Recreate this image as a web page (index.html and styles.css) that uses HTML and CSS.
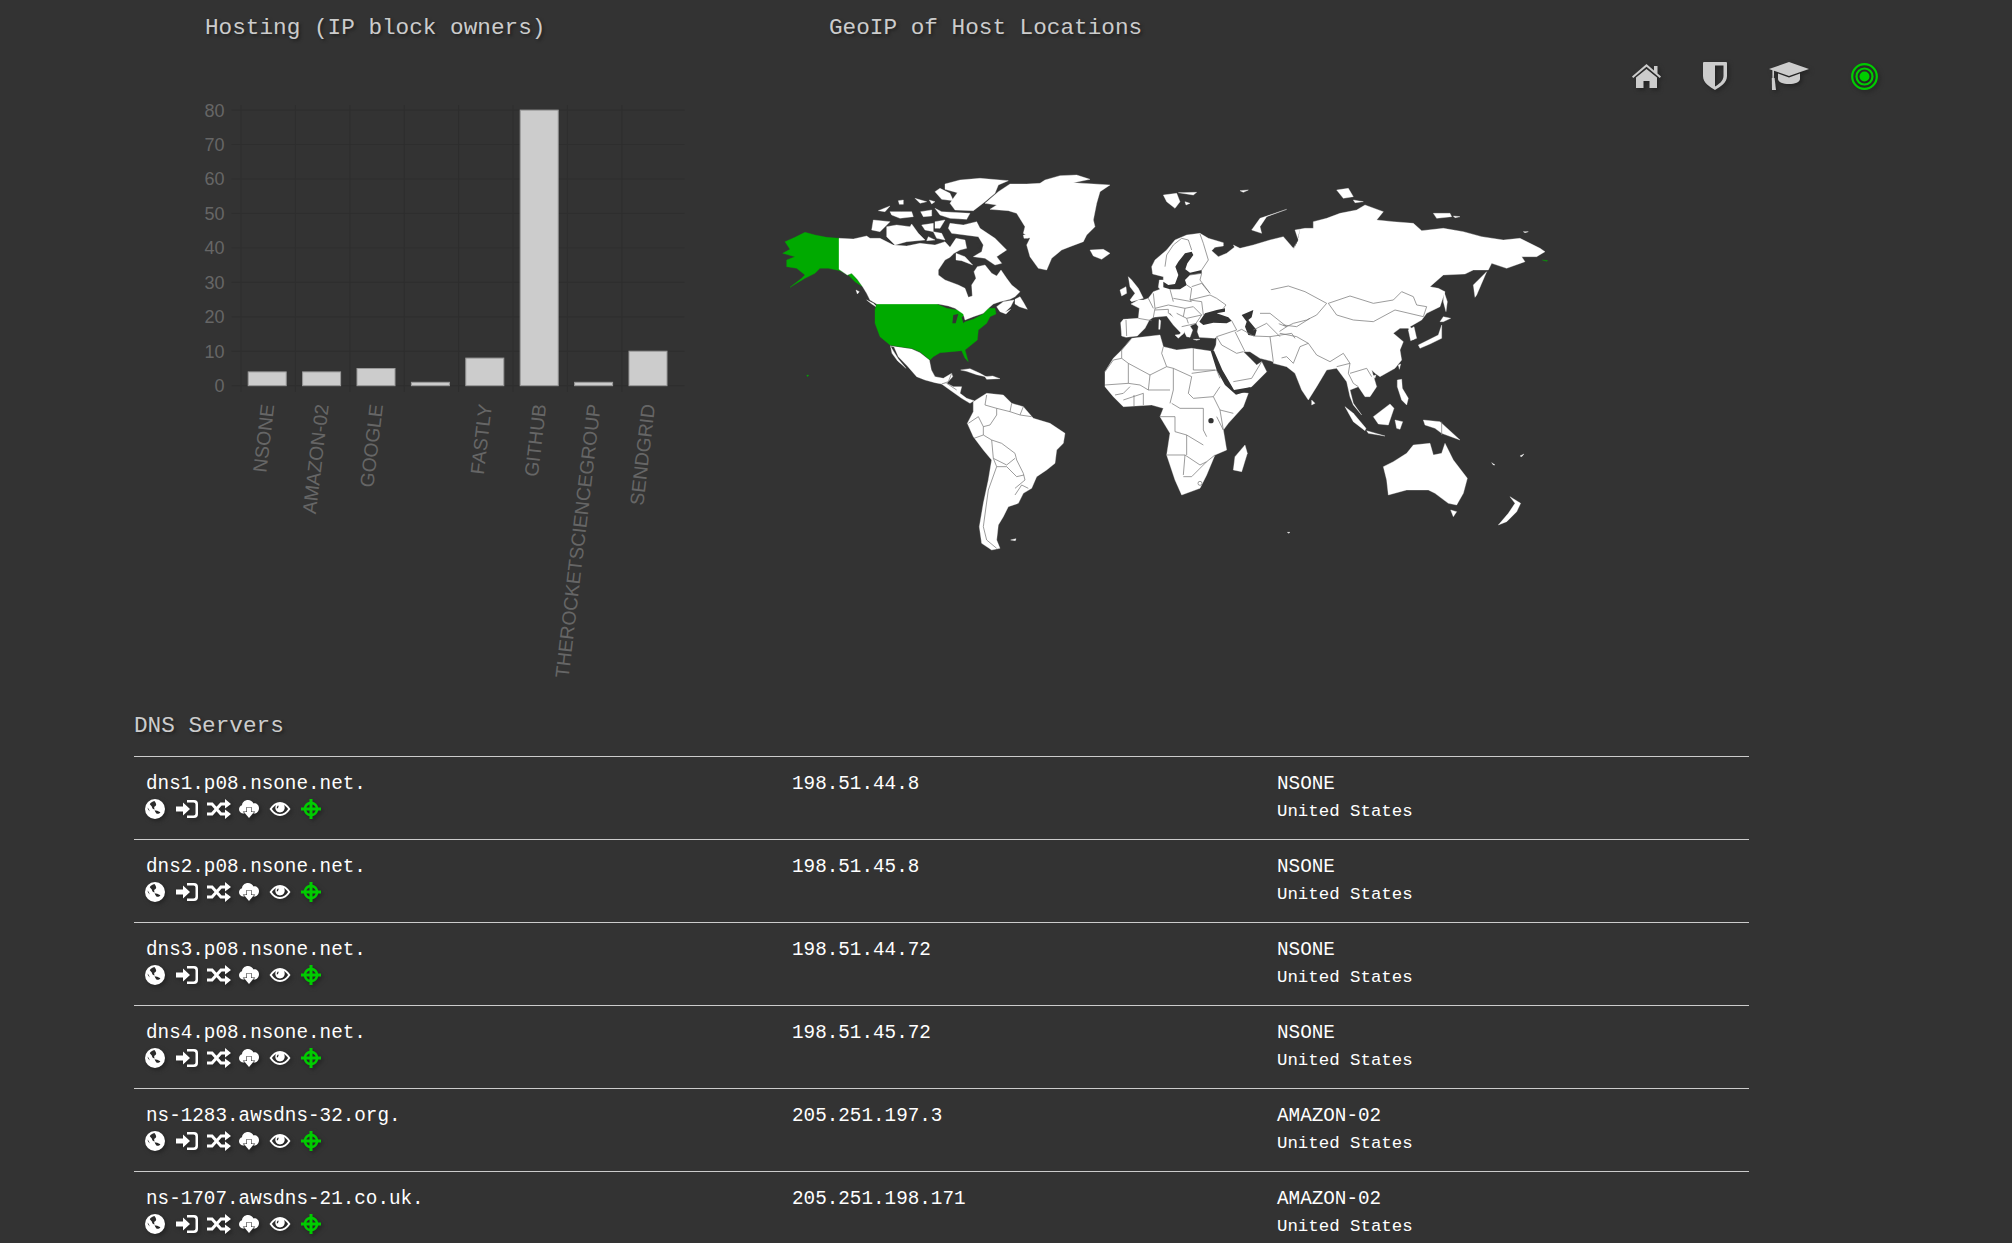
FILE: index.html
```html
<!DOCTYPE html>
<html lang="en">
<head>
    <meta charset="UTF-8">
    <title>Host report</title>
    <link rel="stylesheet" href="styles.css">
</head>
<body>
    <svg class="defs" width="0" height="0">
        <symbol id="i-globe" viewBox="0 0 20 20">
            <path fill-rule="evenodd" d="M10 0a10 10 0 1 1 0 20a10 10 0 1 1 0-20Z M9.4 2C7.4 2.4 5.6 3.6 4.8 5.2C5.6 6.4 6.8 6.8 7 8.2C7.4 9.8 8.6 10.2 9.8 10.6C9.2 9.4 8.8 8.4 9.6 7.6C11 7 11.6 5.4 10.8 4.2C10.4 3.4 10 2.8 9.4 2Z M9.6 11.2C11 11.2 13.4 12 15.4 13.2C14.4 14.6 12.6 15.2 11.4 14.4C10.4 13.4 9.9 12.2 9.6 11.2Z M2.6 8.6C2.8 10.4 3.6 11.6 4.8 12.4C4.2 11 3.6 9.6 2.6 8.6Z"/>
        </symbol>
        <symbol id="i-signin" viewBox="0 0 22 20">
            <path d="M0 7.5H7V3.5L14 10L7 16.5V12.5H0Z"/>
            <path d="M11 1H18a4 4 0 0 1 4 4V15a4 4 0 0 1-4 4H11V16.5H17.5a2 2 0 0 0 2-2V5.5a2 2 0 0 0-2-2H11Z"/>
        </symbol>
        <symbol id="i-random" viewBox="0 0 24 20">
            <path class="thick" d="M0 5H5L14 15H19M0 15H5L14 5H19"/>
            <path d="M18 0L24 5L18 9.6ZM18 10.4L24 15L18 20Z"/>
        </symbol>
        <symbol id="i-cloud" viewBox="0 0 20 20">
            <path d="M4.5 14.5C2 14.5 0 12.6 0 10.2C0 8.4 1.2 6.8 3 6.2C3.3 3.2 5.8 1 9 1C11.4 1 13.5 2.3 14.5 4.4C17.6 4 20 6.2 20 9.2C20 12.2 17.8 14.5 15 14.5Z"/>
            <path class="cut" d="M8 8.5H12V13H15L10 19L5 13H8Z"/>
        </symbol>
        <symbol id="i-eye" viewBox="0 0 21 14">
            <path fill-rule="evenodd" d="M0 7C3 2.4 6.5 0 10.5 0C14.5 0 18 2.4 21 7C18 11.6 14.5 14 10.5 14C6.5 14 3 11.6 0 7Z M2.4 7C4.6 10.2 7.4 12 10.5 12C13.6 12 16.4 10.2 18.6 7C17.4 5.2 16 3.9 14.4 3C15 3.8 15.2 4.8 15.2 5.8C15.2 8.4 13.1 10.5 10.5 10.5C7.9 10.5 5.8 8.4 5.8 5.8C5.8 4.8 6 3.8 6.6 3C5 3.9 3.6 5.2 2.4 7Z M8.4 3.6C7.6 4.4 7.2 5.4 7.4 6.4L8.6 6C8.5 5.2 8.8 4.6 9.4 4.1Z"/>
        </symbol>
        <symbol id="i-cross" viewBox="0 0 20 20">
            <path fill-rule="evenodd" d="M8.5 0H11.5V2.8C14.4 3.4 16.6 5.6 17.2 8.5H20V11.5H17.2C16.6 14.4 14.4 16.6 11.5 17.2V20H8.5V17.2C5.6 16.6 3.4 14.4 2.8 11.5H0V8.5H2.8C3.4 5.6 5.6 3.4 8.5 2.8Z M8.5 5.4C6.9 5.9 5.9 6.9 5.4 8.5H8.5Z M11.5 5.4V8.5H14.6C14.1 6.9 13.1 5.9 11.5 5.4Z M5.4 11.5C5.9 13.1 6.9 14.1 8.5 14.6V11.5Z M11.5 11.5V14.6C13.1 14.1 14.1 13.1 14.6 11.5Z"/>
        </symbol>
    </svg>

    <div class="top">
        <div class="hosting">
            <h2 class="title hosting-title">Hosting (IP block owners)</h2>
            <svg class="chart" viewBox="190 90 580 600" width="580" height="600">
                <g class="grid">
                    <path d="M231.6 110.1H684.5M231.6 144.5H684.5M231.6 179H684.5M231.6 213.4H684.5M231.6 247.9H684.5M231.6 282.3H684.5M231.6 316.8H684.5M231.6 351.2H684.5M231.6 385.7H684.5"/>
                    <path d="M241 105V392M295.4 105V392M349.8 105V392M404.2 105V392M458.6 105V392M513 105V392M567.4 105V392M621.8 105V392"/>
                </g>
                <g class="ticks">
                    <text x="224.5" y="116.5">80</text>
                    <text x="224.5" y="150.9">70</text>
                    <text x="224.5" y="185.4">60</text>
                    <text x="224.5" y="219.8">50</text>
                    <text x="224.5" y="254.3">40</text>
                    <text x="224.5" y="288.7">30</text>
                    <text x="224.5" y="323.2">20</text>
                    <text x="224.5" y="357.6">10</text>
                    <text x="224.5" y="392.1">0</text>
                </g>
                <g class="bars">
                    <rect x="248.2" y="371.9" width="38" height="13.8"/>
                    <rect x="302.6" y="371.9" width="38" height="13.8"/>
                    <rect x="357" y="368.5" width="38" height="17.2"/>
                    <rect x="411.4" y="382.3" width="38" height="3.4"/>
                    <rect x="465.8" y="358.1" width="38" height="27.6"/>
                    <rect x="520.2" y="110.1" width="38" height="275.6"/>
                    <rect x="574.6" y="382.3" width="38" height="3.4"/>
                    <rect x="629" y="351.2" width="38" height="34.5"/>
                </g>
                <g class="labels">
                    <text transform="translate(274.3 405) rotate(-83.3)">NSONE</text>
                    <text transform="translate(328.7 405) rotate(-83.3)">AMAZON-02</text>
                    <text transform="translate(383.1 405) rotate(-83.3)">GOOGLE</text>
                    <text transform="translate(491.9 405) rotate(-83.3)">FASTLY</text>
                    <text transform="translate(546.3 405) rotate(-83.3)">GITHUB</text>
                    <text transform="translate(600.7 405) rotate(-83.3)">THEROCKETSCIENCEGROUP</text>
                    <text transform="translate(655.1 405) rotate(-83.3)">SENDGRID</text>
                </g>
            </svg>
        </div>

        <div class="geoip">
            <h2 class="title geoip-title">GeoIP of Host Locations</h2>
            <svg class="map" viewBox="0 0 790 400" width="790" height="400">
                <!-- americas -->
                <g transform="scale(.33333)">
                    <g class="land">
                        <polygon points="735,418 750,410 762,430 772,448 748,440 735,432"/>
                        <polygon points="680,440 700,425 732,420 722,440 705,457 722,448 708,462 690,455"/>
                        <polygon points="360,558 390,562 425,567 450,578 478,600 484,630 495,650 520,655 545,640 548,650 530,670 515,672 495,668 465,660 440,650 412,618 385,590 372,560"/>
                        <polygon points="362,560 385,597 408,625 383,603 366,580"/>
                        <polygon points="572,630 600,626 630,640 650,651 620,644 590,634"/>
                        <polygon points="645,650 668,648 690,656 650,658"/>
                        <polygon points="515,672 530,670 550,680 575,680 570,700 590,715 612,722 600,730 575,715 540,690"/>
                        <polygon points="610,725 650,700 700,705 725,730 760,740 790,775 840,790 885,820 880,850 860,870 855,910 830,930 800,950 785,985 760,1000 745,1030 715,1040 700,1070 685,1095 680,1140 690,1165 665,1170 635,1150 628,1100 640,1030 655,960 665,900 640,870 610,830 592,790 610,755"/>
                        <polygon points="722,1140 738,1136 736,1142"/>
                        <polygon points="258,390 268,395 262,402"/>
                        <polygon points="290,420 310,430 325,445 305,432"/>
                    </g>
                    <g class="usa">
                        <polygon points="45,245 75,232 105,217 135,225 170,232 207,235 207,328 232,345 245,340 262,360 278,380 255,365 235,345 210,332 175,325 150,325 135,340 105,355 60,382 95,355 105,345 80,325 50,320 50,300 75,290 38,280 60,268"/>
                        <polygon points="320,432 500,432 530,445 560,450 590,455 590,470 580,487 610,478 640,462 655,445 675,445 678,462 660,470 650,490 625,510 622,540 585,570 595,605 585,595 575,572 545,575 510,578 490,590 480,600 450,575 425,565 390,560 360,555 330,530 315,490 315,450"/>
                        <polygon points="110,645 116,646 113,650"/>
                    </g>
                    <g class="sea">
                        <polygon points="547,490 550,465 565,462 557,490"/>
                        <polygon points="575,472 590,462 592,478 580,490"/>
                    </g>
                    <g class="border">
                        <polyline points="650,705 645,735 680,745 680,765 660,795 640,800 625,770 595,790"/>
                        <polyline points="680,745 720,755 725,730"/>
                        <polyline points="720,755 750,765 760,740"/>
                        <polyline points="750,765 785,770"/>
                        <polyline points="640,800 640,825 665,840 695,850 735,880 740,900 760,940 765,960 735,985"/>
                        <polyline points="640,825 612,835"/>
                        <polyline points="665,840 670,895 710,915 735,895"/>
                        <polyline points="670,895 680,920 655,990 640,1100 650,1140 680,1165"/>
                        <polyline points="680,920 710,920 740,950 762,945"/>
                        <polyline points="735,1005 755,975 775,985"/>
                        <polyline points="545,640 535,665 515,672"/>
                        <polyline points="530,670 560,690"/>
                    </g>
                </g>

                <!-- canada and the arctic -->
                <g transform="translate(100 10) scale(.33333)">
                    <g class="land">
                        <polygon points="-93,205 -50,207 -10,198 0,205 30,205 70,225 110,228 150,220 195,225 225,215 240,232 258,205 285,210 290,235 270,240 252,250 240,262 225,270 205,300 205,315 225,330 265,345 285,355 295,382 307,378 305,345 318,325 312,305 322,290 345,285 365,310 380,318 393,300 410,325 425,345 450,365 435,380 420,388 390,395 370,402 355,415 340,430 310,440 285,450 280,432 255,415 235,408 205,402 20,402 0,390 -10,370 -22,350 -38,328 -55,310 -68,315 -93,298"/>
                        <polygon points="345,100 385,65 420,42 470,42 510,40 525,30 570,17 620,15 660,28 610,38 720,45 690,65 680,100 670,150 675,170 650,195 640,215 600,230 575,240 545,265 530,300 505,295 480,260 470,225 480,205 460,190 465,170 440,130 415,122 360,118 380,105"/>
                        <polygon points="225,42 270,30 330,25 415,32 385,45 375,70 345,95 310,122 255,120 240,100 250,85 262,68 225,58"/>
                        <polygon points="195,65 210,55 240,70 250,92 215,88"/>
                        <polygon points="25,122 60,108 45,125"/>
                        <polygon points="60,125 95,125 125,125 130,140 90,145 65,135"/>
                        <polygon points="85,92 100,90 100,103 88,103"/>
                        <polygon points="135,85 170,95 150,100"/>
                        <polygon points="178,90 195,95 185,102"/>
                        <polygon points="152,125 185,120 185,138 160,140"/>
                        <polygon points="195,115 215,125 300,130 290,148 240,145 210,135"/>
                        <polygon points="10,150 60,155 30,185 5,180"/>
                        <polygon points="50,170 80,165 120,170 125,162 145,190 165,210 110,215 75,225 50,200"/>
                        <polygon points="155,165 190,160 190,185 165,180"/>
                        <polygon points="195,155 225,150 210,175 195,175"/>
                        <polygon points="190,185 215,190 225,210 200,205"/>
                        <polygon points="175,200 195,210 170,212"/>
                        <polygon points="240,160 280,165 320,155 330,175 375,205 410,240 380,260 395,280 375,285 345,265 310,260 335,245 340,225 325,200 285,195 245,190 235,175"/>
                        <polygon points="258,250 285,260 308,285 275,272 258,270"/>
                        <polygon points="460,195 485,195 475,205 462,205"/>
                        <polygon points="660,240 700,238 720,250 695,268 670,258"/>
                    </g>
                    <g class="sea">
                        <polygon points="318,220 332,218 328,235 318,232"/>
                    </g>
                </g>

                <!-- asia, africa and the east -->
                <g transform="translate(290 0) scale(.33333)">
                    <g class="land">
                        <polygon points="520,255 540,265 580,255 630,240 670,230 700,265 715,240 705,210 735,205 760,205 760,185 800,175 840,160 890,150 915,135 970,155 950,180 1000,185 1060,190 1085,212 1150,205 1210,215 1265,230 1330,240 1380,235 1440,265 1455,275 1430,290 1385,290 1395,305 1340,325 1295,310 1285,330 1240,330 1215,342 1150,345 1110,380 1135,385 1155,395 1140,440 1100,460 1085,480 1050,500 1060,510 1060,540 1045,505 1020,505 1000,520 1030,545 1020,570 1025,600 1005,625 960,650 945,640 935,630 950,680 930,710 915,710 895,680 870,690 880,730 905,765 880,735 870,710 860,665 830,625 800,630 770,680 745,720 725,690 705,640 680,620 640,610 640,450"/>
                        <polygon points="135,635 160,595 185,570 215,535 300,525 310,560 350,570 395,565 465,575 470,600 490,650 520,695 565,700 550,740 505,790 490,810 500,870 465,885 440,945 420,985 365,1005 345,960 320,885 330,820 300,770 310,745 275,735 190,740 160,710 135,680"/>
                        <polygon points="555,855 562,880 545,935 520,930 525,890"/>
                        <polygon points="310,105 350,100 360,125 345,145 320,125"/>
                        <polygon points="355,98 410,97 400,105"/>
                        <polygon points="375,125 390,130 378,135"/>
                        <polygon points="540,92 565,90 550,97"/>
                        <polygon points="575,210 600,175 680,148 620,170 600,200 605,220"/>
                        <polygon points="755,720 765,730 755,735"/>
                        <polygon points="1090,780 1140,785 1200,840 1145,820 1125,805 1095,795"/>
                        <polygon points="970,920 1000,905 1040,880 1060,855 1110,850 1120,885 1145,880 1155,850 1180,900 1222,955 1210,1000 1190,1035 1165,1030 1125,1000 1105,990 1040,990 985,1005 980,960"/>
                        <polygon points="1172,1050 1190,1055 1180,1070"/>
                        <polygon points="1350,1010 1382,1030 1370,1055 1340,1085 1315,1095 1345,1060 1365,1030"/>
                        <polygon points="830,90 865,85 880,110 850,115"/>
                        <polygon points="880,120 910,125 885,128"/>
                        <polygon points="1120,160 1170,160 1175,170 1130,175"/>
                        <polygon points="1180,168 1200,170 1185,173"/>
                        <polygon points="1390,215 1405,215 1395,218"/>
                        <polygon points="682,1117 690,1117 686,1120"/>
                        <polygon points="1380,888 1392,882 1385,890"/>
                        <polygon points="1295,908 1305,915 1300,915"/>
                    </g>
                    <g class="sea">
                        <polygon points="700,270 712,240 722,200 712,245"/>
                    </g>
                    <g class="usa">
                        <polygon points="1447,300 1463,302 1460,304"/>
                    </g>
                    <g class="border">
                        <polyline points="600,470 680,500 700,490 740,480 770,465 800,430 735,395 685,378 630,390 625,415 560,410 540,420 540,445"/>
                        <polyline points="805,430 870,408 940,430 1000,420 1025,395 1060,410 1070,435 1100,440 1090,470 1005,450 940,485 880,480 830,465 805,430"/>
                        <polyline points="600,490 650,520 680,500"/>
                        <polyline points="630,575 630,545 660,520 710,530 745,550"/>
                        <polyline points="640,600 680,590 700,610 720,560 745,550"/>
                        <polyline points="745,550 770,585 810,605 850,580 870,610 830,620"/>
                        <polyline points="870,610 865,640 880,670 895,680"/>
                        <polyline points="870,640 920,625 935,650"/>
                        <polyline points="185,595 205,610 270,645 320,620 305,580 310,560"/>
                        <polyline points="215,535 185,570 185,595 160,600 135,635"/>
                        <polyline points="205,610 205,670 135,675"/>
                        <polyline points="400,565 400,630 465,630"/>
                        <polyline points="320,620 340,625 395,650 385,700 400,715 460,710"/>
                        <polyline points="340,625 340,690 330,730"/>
                        <polyline points="395,640 470,630 480,655"/>
                        <polyline points="270,645 265,690 330,690"/>
                        <polyline points="205,670 240,675 265,690"/>
                        <polyline points="190,720 250,700 250,735"/>
                        <polyline points="222,705 222,738"/>
                        <polyline points="165,705 190,700 210,680"/>
                        <polyline points="480,680 460,710 480,750 520,760"/>
                        <polyline points="335,730 360,745 430,745"/>
                        <polyline points="300,770 345,770 345,815 380,825 430,855"/>
                        <polyline points="380,825 380,885"/>
                        <polyline points="320,885 375,885 370,945"/>
                        <polyline points="430,745 430,810 440,830"/>
                        <polyline points="480,750 490,810 470,770"/>
                        <polyline points="375,885 420,915 440,905 465,885"/>
                        <polyline points="370,950 395,950 440,905"/>
                        <polyline points="1145,785 1145,825"/>
                        <circle cx="420" cy="970" r="6"/>
                    </g>
                    <circle class="sea" cx="453" cy="782" r="8"/>
                </g>

                <!-- europe and the middle east -->
                <g transform="translate(340 70) scale(.33333)">
                    <g class="land">
                        <polygon points="125,110 135,90 170,60 195,30 230,15 270,10 295,25 340,38 340,48 315,52 305,62 325,80 350,70 375,50 500,200 515,395 490,395 450,385 420,365 400,365 420,385 440,405 455,395 470,425 425,470 385,482 372,482 335,420 305,375 318,345 320,320 315,325 268,322 262,305 265,290 258,280 240,288 248,300 240,322 230,320 215,290 180,250 175,250 200,270 222,295 222,310 205,322 212,308 190,285 170,258 130,262 118,270 105,295 82,318 48,322 35,318 32,278 40,268 85,265 88,235 63,222 85,210 100,210 115,205 130,185 150,178 145,172 148,150 160,150 160,140 128,132"/>
                        <polygon points="55,140 65,150 85,175 100,205 65,215 60,210 75,190 60,170"/>
                        <polygon points="30,180 48,170 50,190 35,198"/>
                        <polygon points="147,268 152,272 150,298 146,298"/>
                        <polygon points="195,315 218,312 205,325"/>
                        <polygon points="250,328 270,328 260,331"/>
                        <polygon points="300,318 310,316 304,322"/>
                    </g>
                    <g class="sea">
                        <polygon points="160,155 175,165 195,162 205,135 196,110 205,95 225,70 245,65 250,75 232,100 226,118 240,128 275,120 275,130 240,135 225,150 230,165 210,178 180,178 160,172"/>
                        <polygon points="268,275 285,250 320,240 345,235 345,245 320,250 355,262 365,272 350,280 310,278 280,285"/>
                        <polygon points="395,255 430,240 425,262 415,270 440,300 435,318 415,315 405,290 410,275"/>
                        <polygon points="302,362 312,362 337,420 372,480 420,472 418,482 378,494 345,465 320,420"/>
                    </g>
                    <g class="border">
                        <polyline points="165,110 170,75 190,45 215,25 235,30 245,60"/>
                        <polyline points="270,12 280,40 295,90 275,120"/>
                        <polyline points="240,135 275,130 270,150 300,190"/>
                        <polyline points="180,178 190,215"/>
                        <polyline points="190,205 245,215"/>
                        <polyline points="230,165 245,175 240,210"/>
                        <polyline points="245,170 275,160 300,190"/>
                        <polyline points="240,210 300,195 320,205 348,225 340,235"/>
                        <polyline points="130,190 135,235 175,225"/>
                        <polyline points="115,205 130,235"/>
                        <polyline points="135,235 130,262"/>
                        <polyline points="85,265 125,272"/>
                        <polyline points="48,270 50,318"/>
                        <polyline points="135,240 175,238 175,250"/>
                        <polyline points="175,225 225,235 220,260"/>
                        <polyline points="225,235 250,230 275,255"/>
                        <polyline points="240,210 275,215 280,255"/>
                        <polyline points="230,265 275,255 258,280"/>
                        <polyline points="215,290 260,280"/>
                        <polyline points="200,250 230,265 235,280"/>
                        <polyline points="320,320 380,300 365,272"/>
                        <polyline points="320,320 335,345 380,370 400,365"/>
                        <polyline points="375,305 405,365"/>
                        <polyline points="370,455 425,445 455,395"/>
                        <polyline points="380,305 395,298 430,318 480,320 490,395"/>
                        <polyline points="450,250 480,250 530,290"/>
                        <polyline points="430,300 470,280 510,320"/>
                        <polyline points="480,320 545,310 555,325"/>
                        <polyline points="520,285 560,290 600,265"/>
                    </g>
                </g>

                <!-- japan and the islands -->
                <g transform="translate(570 110) scale(.33333)">
                    <g class="land">
                        <polygon points="312,65 322,95 318,125 310,95"/>
                        <polygon points="300,155 310,140 332,145 310,155"/>
                        <polygon points="235,225 265,210 295,195 305,165 305,205 270,222 240,235"/>
                        <polygon points="400,45 440,5 410,75 405,82"/>
                        <polygon points="97,318 108,315 105,325"/>
                        <polygon points="175,285 182,282 178,298"/>
                        <polygon points="172,330 185,328 187,355 205,385 200,405 185,390 172,350"/>
                        <polygon points="100,440 150,402 162,415 145,465 115,462"/>
                        <polygon points="165,450 188,455 180,478 170,475"/>
                        <polygon points="15,410 40,430 78,475 75,482 40,455"/>
                        <polygon points="80,482 135,498 85,490"/>
                        <polygon points="205,180 222,170 230,205 212,212"/>
                    </g>
                </g>
            </svg>
        </div>

        <div class="nav">
            <svg class="nav-home" viewBox="0 0 29 24">
                <path d="M14.5 0L22 6.4V2H25.5V9.4L29 12.4L27.8 13.9L14.5 2.8L1.2 13.9L0 12.4Z"/>
                <path d="M14.5 5L25 13.6V24H17.5V17H11.5V24H4V13.6Z"/>
            </svg>
            <svg class="nav-shield" viewBox="0 0 24 28">
                <path fill-rule="evenodd" d="M1 0H23a1 1 0 0 1 1 1V14C24 21 17 25 12 28C7 25 0 21 0 14V1a1 1 0 0 1 1-1Z M12 3.5V24.5C15.5 22.5 20.5 19 20.5 14V3.5Z"/>
            </svg>
            <svg class="nav-cap" viewBox="0 0 40 28">
                <path d="M20 0L40 7L20 14L5 8.8V12L4.8 16.5H3.4V8.2L0 7Z"/>
                <path d="M9 11.5L20 15.5L31 11.5V17C31 20 26 22 20 22C14 22 9 20 9 17Z"/>
                <path d="M2.8 16H5.6L7 28H3Z"/>
            </svg>
            <svg class="nav-target" viewBox="0 0 27 27">
                <circle cx="13.5" cy="13.5" r="12.3"/>
                <circle cx="13.5" cy="13.5" r="8"/>
                <circle class="dot" cx="13.5" cy="13.5" r="5"/>
            </svg>
        </div>
    </div>

    <h2 class="title dns-title">DNS Servers</h2>
    <div class="dns">
        <div class="row">
            <div>
                <div class="host">dns1.p08.nsone.net.</div>
                <div class="tools">
                    <svg class="t20"><use href="#i-globe"/></svg>
                    <svg class="t22"><use href="#i-signin"/></svg>
                    <svg class="t24"><use href="#i-random"/></svg>
                    <svg class="t20"><use href="#i-cloud"/></svg>
                    <svg class="t21"><use href="#i-eye"/></svg>
                    <svg class="t20 on"><use href="#i-cross"/></svg>
                </div>
            </div>
            <div class="ip">198.51.44.8</div>
            <div>
                <div class="owner">NSONE</div>
                <div class="country">United States</div>
            </div>
        </div>
        <div class="row">
            <div>
                <div class="host">dns2.p08.nsone.net.</div>
                <div class="tools">
                    <svg class="t20"><use href="#i-globe"/></svg>
                    <svg class="t22"><use href="#i-signin"/></svg>
                    <svg class="t24"><use href="#i-random"/></svg>
                    <svg class="t20"><use href="#i-cloud"/></svg>
                    <svg class="t21"><use href="#i-eye"/></svg>
                    <svg class="t20 on"><use href="#i-cross"/></svg>
                </div>
            </div>
            <div class="ip">198.51.45.8</div>
            <div>
                <div class="owner">NSONE</div>
                <div class="country">United States</div>
            </div>
        </div>
        <div class="row">
            <div>
                <div class="host">dns3.p08.nsone.net.</div>
                <div class="tools">
                    <svg class="t20"><use href="#i-globe"/></svg>
                    <svg class="t22"><use href="#i-signin"/></svg>
                    <svg class="t24"><use href="#i-random"/></svg>
                    <svg class="t20"><use href="#i-cloud"/></svg>
                    <svg class="t21"><use href="#i-eye"/></svg>
                    <svg class="t20 on"><use href="#i-cross"/></svg>
                </div>
            </div>
            <div class="ip">198.51.44.72</div>
            <div>
                <div class="owner">NSONE</div>
                <div class="country">United States</div>
            </div>
        </div>
        <div class="row">
            <div>
                <div class="host">dns4.p08.nsone.net.</div>
                <div class="tools">
                    <svg class="t20"><use href="#i-globe"/></svg>
                    <svg class="t22"><use href="#i-signin"/></svg>
                    <svg class="t24"><use href="#i-random"/></svg>
                    <svg class="t20"><use href="#i-cloud"/></svg>
                    <svg class="t21"><use href="#i-eye"/></svg>
                    <svg class="t20 on"><use href="#i-cross"/></svg>
                </div>
            </div>
            <div class="ip">198.51.45.72</div>
            <div>
                <div class="owner">NSONE</div>
                <div class="country">United States</div>
            </div>
        </div>
        <div class="row">
            <div>
                <div class="host">ns-1283.awsdns-32.org.</div>
                <div class="tools">
                    <svg class="t20"><use href="#i-globe"/></svg>
                    <svg class="t22"><use href="#i-signin"/></svg>
                    <svg class="t24"><use href="#i-random"/></svg>
                    <svg class="t20"><use href="#i-cloud"/></svg>
                    <svg class="t21"><use href="#i-eye"/></svg>
                    <svg class="t20 on"><use href="#i-cross"/></svg>
                </div>
            </div>
            <div class="ip">205.251.197.3</div>
            <div>
                <div class="owner">AMAZON-02</div>
                <div class="country">United States</div>
            </div>
        </div>
        <div class="row">
            <div>
                <div class="host">ns-1707.awsdns-21.co.uk.</div>
                <div class="tools">
                    <svg class="t20"><use href="#i-globe"/></svg>
                    <svg class="t22"><use href="#i-signin"/></svg>
                    <svg class="t24"><use href="#i-random"/></svg>
                    <svg class="t20"><use href="#i-cloud"/></svg>
                    <svg class="t21"><use href="#i-eye"/></svg>
                    <svg class="t20 on"><use href="#i-cross"/></svg>
                </div>
            </div>
            <div class="ip">205.251.198.171</div>
            <div>
                <div class="owner">AMAZON-02</div>
                <div class="country">United States</div>
            </div>
        </div>
    </div>
</body>
</html>
```

FILE: styles.css
```css
html, body {
    height: 100%;
    overflow: hidden;
}
body {
    margin: 0;
    background: #333;
    color: #fff;
    font-family: "Liberation Mono", monospace;
}
.defs {
    display: block;
    height: 0;
}
.top {
    display: flex;
    padding-bottom: 21px;
}
.title {
    margin: 0;
    font-size: 22.7px;
    font-weight: normal;
    line-height: 30px;
    color: #ccc;
    text-shadow: 2px 2px 3px #222;
}
.hosting {
    width: 580px;
    margin-left: 190px;
}
.hosting-title {
    padding: 13px 0 0 15px;
}
.chart {
    display: block;
    margin-top: 47px;
}
.grid path {
    fill: none;
    stroke: #2e2e2e;
    stroke-width: 1;
}
.ticks text {
    fill: #666;
    font: 18px "Liberation Sans", sans-serif;
    text-anchor: end;
}
.bars rect {
    fill: #ccc;
    stroke: #999;
    stroke-width: 1;
}
.labels text {
    fill: #666;
    font: 19.3px "Liberation Sans", sans-serif;
    text-anchor: end;
}
.geoip {
    width: 790px;
}
.geoip-title {
    padding: 13px 0 0 59px;
}
.map {
    display: block;
    margin-top: 117px;
}
.land polygon {
    fill: #fff;
    stroke: #fff;
    stroke-width: 1;
    stroke-linejoin: round;
}
.usa polygon {
    fill: #0a0;
    stroke: #0a0;
    stroke-width: 1;
    stroke-linejoin: round;
}
.sea polygon, circle.sea {
    fill: #333;
}
.border polyline, .border circle {
    fill: none;
    stroke: #777;
    stroke-width: 2.2;
    stroke-linejoin: round;
}
.nav {
    display: flex;
    align-items: center;
    gap: 42px;
    height: 28px;
    margin-left: 72px;
    padding-top: 62px;
    fill: #ccc;
}
.nav svg {
    filter: drop-shadow(2px 2px 2px #222);
}
.nav-home {
    width: 29px;
    height: 24px;
}
.nav-shield {
    width: 24px;
    height: 28px;
}
.nav-cap {
    width: 40px;
    height: 28px;
}
.nav-target {
    width: 27px;
    height: 27px;
}
.nav-target circle {
    fill: none;
    stroke: #0c0;
    stroke-width: 2.2;
}
.nav-target .dot {
    fill: #0c0;
    stroke: none;
}
.dns-title {
    margin-left: 134px;
}
.dns {
    width: 1615px;
    margin: 15px 0 0 134px;
}
.row {
    display: grid;
    grid-template-columns: 646px 485px 1fr;
    height: 67px;
    padding: 15px 0 0 12px;
    border-top: 1px solid #ccc;
    font-size: 19.3px;
    line-height: 24px;
}
.tools {
    display: flex;
    align-items: center;
    gap: 7px;
    height: 24px;
    margin: 1px 0 0 -3px;
    fill: #fff;
}
.tools svg {
    height: 20px;
    filter: drop-shadow(2px 2px 2px #222);
}
.tools .t20 {
    width: 24px;
}
.tools .t21 {
    width: 24px;
    height: 14px;
}
.tools .t22 {
    width: 24px;
    margin-left: 1px;
}
.tools .t24 {
    width: 24px;
    margin: 0 -1px 0 1px;
}
.tools .on {
    fill: #0c0;
}
.thick {
    fill: none;
    stroke: #fff;
    stroke-width: 3;
}
.cut {
    stroke: #333;
    stroke-width: 1.2;
    paint-order: stroke;
}
.country {
    margin-top: 4px;
    font-size: 17.4px;
}
```
